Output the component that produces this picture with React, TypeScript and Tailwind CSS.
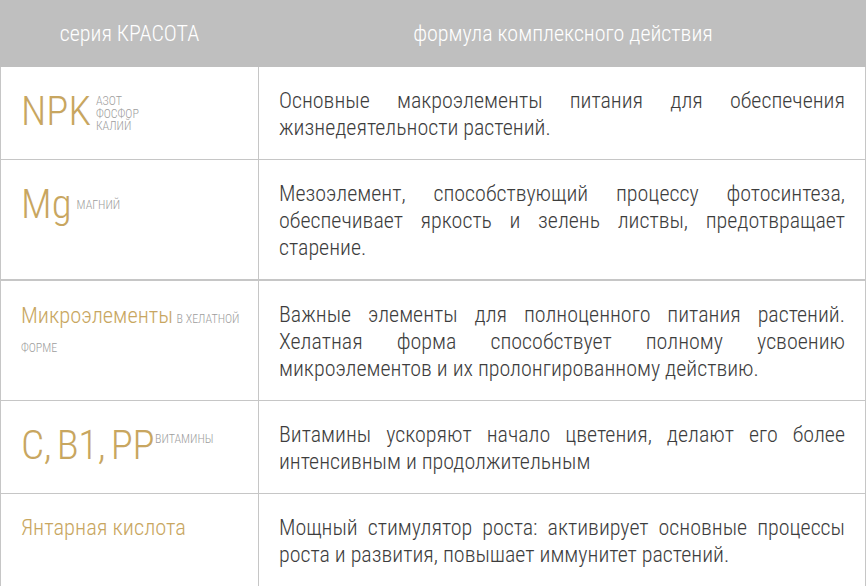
import React from "react";

const rows = [
  {
    key: "npk",
    text: "Основные макроэлементы питания для обеспечения жизнедеятельности растений.",
  },
  {
    key: "mg",
    text: "Мезоэлемент, способствующий процессу фотосинтеза, обеспечивает яркость и зелень листвы, предотвращает старение.",
  },
  {
    key: "micro",
    text: "Важные элементы для полноценного питания растений. Хелатная форма способствует полному усвоению микроэлементов и их пролонгированному действию.",
  },
  {
    key: "vit",
    text: "Витамины ускоряют начало цветения, делают его более интенсивным и продолжительным",
  },
  {
    key: "acid",
    text: "Мощный стимулятор роста: активирует основные процессы роста и развития, повышает иммунитет растений.",
  },
];

function Label({ k }: { k: string }) {
  if (k === "npk")
    return (
      <div className="mt-1 flex items-start gap-[5px]">
        <span className="text-[41px] leading-none text-[#c8a660]">NPK</span>
        <span className="mt-[4px] flex flex-col text-[12px] uppercase leading-[12.5px] text-[#9d9d9d]">
          <span>Азот</span>
          <span>Фосфор</span>
          <span>Калий</span>
        </span>
      </div>
    );
  if (k === "mg")
    return (
      <div className="mt-1 flex items-start gap-[5px]">
        <span className="text-[41px] leading-none text-[#c8a660]">Mg</span>
        <span className="mt-[15px] text-[12px] uppercase leading-[12px] text-[#9d9d9d]">Магний</span>
      </div>
    );
  if (k === "micro")
    return (
      <div className="leading-[28px]">
        <span className="text-[22.5px] text-[#c8a660]">Микроэлементы</span>{" "}
        <span className="text-[12px] uppercase text-[#9d9d9d]">в хелатной форме</span>
      </div>
    );
  if (k === "vit")
    return (
      <div className="mt-1 flex items-start gap-[1px]">
        <span className="text-[41px] leading-none tracking-[-0.5px] text-[#c8a660] [word-spacing:-3px]">C, B1, PP</span>
        <span className="mt-[8px] text-[12px] uppercase leading-[12px] text-[#9d9d9d]">Витамины</span>
      </div>
    );
  return <div className="text-[22.5px] leading-[27px] text-[#c8a660]">Янтарная кислота</div>;
}

export default function App() {
  return (
    <div
      className="w-[866px] h-[586px] overflow-hidden bg-white font-light"
      style={{ fontFamily: "'Roboto Condensed', Roboto, sans-serif" }}
    >
      <div className="grid h-[67px] grid-cols-[259px_1fr] items-center bg-[#bfbfbf] text-[22px] text-white">
        <div className="text-center">серия КРАСОТА</div>
        <div className="pl-px text-center">формула комплексного действия</div>
      </div>
      <div className="w-[866px] border-x border-[#c6c6c6]">
        {rows.map((r, i) => (
          <div
            key={r.key}
            className={`grid grid-cols-[258px_1fr] border-[#c6c6c6] ${i === 1 ? "border-b-2" : "border-b"}`}
          >
            <div className="border-r border-[#c6c6c6] pl-5 pt-5">
              <Label k={r.key} />
            </div>
            <div className="px-5 pb-[18px] pt-5 text-justify text-[22px] leading-[27px] text-[#3d3d3d]">
              {r.text}
            </div>
          </div>
        ))}
      </div>
    </div>
  );
}
